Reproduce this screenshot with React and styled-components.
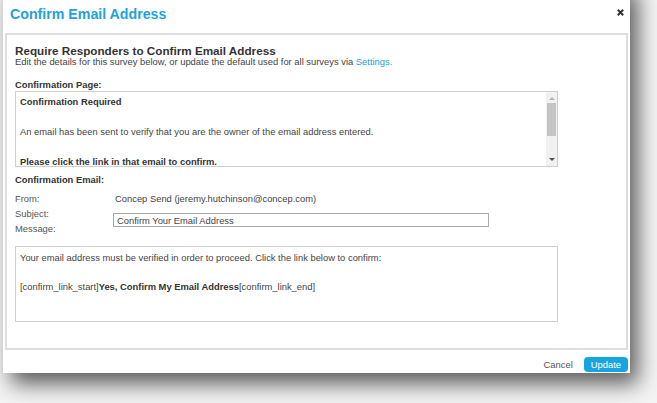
import React from 'react'
import styled, { createGlobalStyle } from 'styled-components'

const Global = createGlobalStyle`
  html, body {
    margin: 0;
    padding: 0;
    overflow: hidden;
  }
  body {
    font-family: "Liberation Sans", Arial, sans-serif;
    background: #f3f3f3;
  }
`

const Page = styled.div`
  display: flex;
  align-items: flex-start;
  height: 403px;
  padding-left: 3px;
  background: #f4f4f4;
`

const Dialog = styled.div`
  margin-top: -20px;
  width: 627px;
  height: 393px;
  background: #fff;
  box-shadow: 8px 11px 20px rgba(0, 0, 0, 0.62);
  display: flex;
  flex-direction: column;
`

const Header = styled.div`
  height: 53px;
  flex: none;
  display: flex;
  justify-content: space-between;
  align-items: flex-start;
  padding: 24px 6px 0 7px;
  box-sizing: border-box;
`

const Title = styled.h1`
  margin: 0;
  font-size: 14.2px;
  line-height: 20px;
  font-weight: bold;
  color: #1ea2dc;
`

const Close = styled.div`
  margin-top: 5px;
  width: 7px;
  height: 7px;
  cursor: pointer;

  svg {
    display: block;
  }
`

const Panel = styled.div`
  margin: 0 2px;
  height: 317px;
  flex: none;
  box-sizing: border-box;
  border: 2px solid #dedede;
  padding: 11px 8px 0 8px;
`

const Heading = styled.h2`
  margin: 0;
  font-size: 11.7px;
  line-height: 10px;
  font-weight: bold;
  color: #333;
`

const Text = styled.div`
  margin-top: ${p => p.$mt || 0}px;
  font-size: 9.4px;
  line-height: 11px;
  font-weight: ${p => (p.$bold ? 'bold' : 'normal')};
  color: ${p => (p.$bold ? '#333' : '#444')};
  white-space: nowrap;
`

const Link = styled.a`
  color: #22a1da;
  text-decoration: none;
`

const Strong = styled.b`
  color: #333;
`

const Box = styled.div`
  margin-top: ${p => p.$mt || 0}px;
  width: 543px;
  height: 76px;
  box-sizing: border-box;
  border: 1px solid #cfcfcf;
  display: flex;
  overflow: hidden;
`

const BoxBody = styled.div`
  flex: 1;
  padding: ${p => p.$pt}px 4px 0 4px;
  overflow: hidden;
`

const Scrollbar = styled.div`
  width: 11px;
  flex: none;
  background: #f1f1f1;
  display: flex;
  flex-direction: column;
  align-items: center;
`

const Arrow = styled.div`
  width: 0;
  height: 0;
  border-left: 3px solid transparent;
  border-right: 3px solid transparent;
  ${p =>
    p.$down
      ? 'border-top: 3px solid #505050; margin-top: auto; margin-bottom: 5px;'
      : 'border-bottom: 3px solid #b5b5b5; margin-top: 5px;'}
`

const Thumb = styled.div`
  margin-top: 3px;
  width: 9px;
  height: 33px;
  background: #c4c4c4;
`

const Row = styled.div`
  margin-top: ${p => p.$mt || 0}px;
  display: flex;
  align-items: flex-start;
  height: ${p => p.$h}px;
`

const Label = styled.div`
  width: 100px;
  flex: none;
  font-size: 9.4px;
  line-height: 11px;
  color: #555;
`

const Value = styled.div`
  font-size: 9.4px;
  line-height: 11px;
  color: #444;
`

const Input = styled.input`
  margin: 5px 0 0 -2px;
  width: 376px;
  height: 14px;
  box-sizing: border-box;
  border: 1px solid #a9a9a9;
  padding: 0 3px;
  font-family: "Liberation Sans", Arial, sans-serif;
  font-size: 9.4px;
  line-height: 12px;
  color: #444;
  outline: none;
`

const Footer = styled.div`
  flex: 1;
  display: flex;
  justify-content: flex-end;
  align-items: flex-start;
  gap: 11px;
  padding: 7px 2px 0 0;
`

const Cancel = styled.span`
  font-size: 9.4px;
  line-height: 15px;
  color: #555;
  cursor: pointer;
`

const Update = styled.button`
  height: 15px;
  padding: 0 7px;
  border: 0;
  border-radius: 4px;
  background: #17a5e2;
  color: #fff;
  font-family: "Liberation Sans", Arial, sans-serif;
  font-size: 9.4px;
  line-height: 15px;
  cursor: pointer;
`

export default () => (
  <Page>
    <Global />
    <Dialog>
      <Header>
        <Title>Confirm Email Address</Title>
        <Close aria-label="Close">
          <svg width="7" height="7" viewBox="0 0 7 7">
            <path d="M0.8 0.8L6.2 6.2M6.2 0.8L0.8 6.2" stroke="#333" strokeWidth="2" />
          </svg>
        </Close>
      </Header>

      <Panel>
        <Heading>Require Responders to Confirm Email Address</Heading>
        <Text>
          Edit the details for this survey below, or update the default used for all surveys via{' '}
          <Link href="#">Settings.</Link>
        </Text>

        <Text $bold $mt={12}>Confirmation Page:</Text>
        <Box $mt={1}>
          <BoxBody $pt={4}>
            <Text $bold>Confirmation Required</Text>
            <Text $mt={19}>An email has been sent to verify that you are the owner of the email address entered.</Text>
            <Text $bold $mt={19}>Please click the link in that email to confirm.</Text>
          </BoxBody>
          <Scrollbar>
            <Arrow />
            <Thumb />
            <Arrow $down />
          </Scrollbar>
        </Box>

        <Text $bold $mt={7}>Confirmation Email:</Text>
        <Row $mt={8} $h={11}>
          <Label>From:</Label>
          <Value>Concep Send (jeremy.hutchinson@concep.com)</Value>
        </Row>
        <Row $mt={4} $h={15}>
          <Label>Subject:</Label>
          <Input defaultValue="Confirm Your Email Address" />
        </Row>
        <Label>Message:</Label>
        <Box $mt={12}>
          <BoxBody $pt={5}>
            <Text>Your email address must be verified in order to proceed. Click the link below to confirm:</Text>
            <Text $mt={18}>
              [confirm_link_start]<Strong>Yes, Confirm My Email Address</Strong>[confirm_link_end]
            </Text>
          </BoxBody>
        </Box>
      </Panel>

      <Footer>
        <Cancel>Cancel</Cancel>
        <Update>Update</Update>
      </Footer>
    </Dialog>
  </Page>
)
